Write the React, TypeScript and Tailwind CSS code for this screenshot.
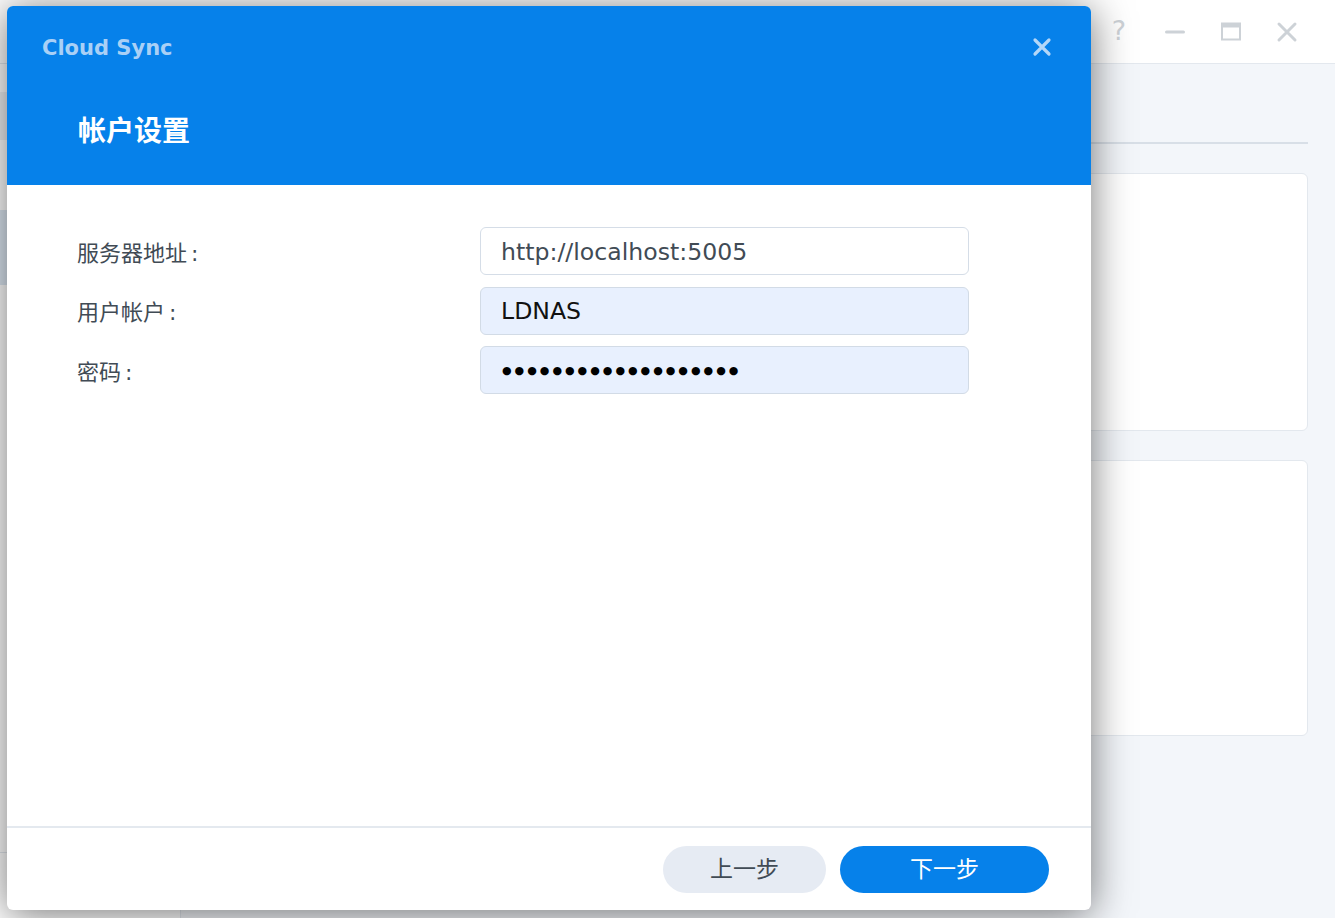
import React from "react";

const CJK = "font-['DejaVu_Sans','Noto_Sans_CJK_SC',sans-serif]";

export default function App() {
  return (
    <div className="relative w-[1335px] h-[918px] overflow-hidden bg-[#f3f6fa] font-['DejaVu_Sans','Noto_Sans_CJK_SC',sans-serif]">
      {/* Background application window */}
      <div className="flex flex-col w-full h-full">
        <div className="h-[64px] bg-white border-b border-[#e3e8ee] flex items-center justify-end pr-[37px] gap-[34px] text-[#cdd2d7]">
          <span className="w-[22px] flex justify-center text-[27px] font-medium leading-none pb-[3px]">?</span>
          <svg width="22" height="22" viewBox="0 0 22 22"><rect x="1" y="9.5" width="20" height="3" rx="1.5" fill="#cdd2d7" /></svg>
          <svg width="22" height="22" viewBox="0 0 22 22"><rect x="2" y="2.5" width="18" height="16" fill="none" stroke="#cdd2d7" strokeWidth="2" /><rect x="2" y="2.5" width="18" height="4" fill="#cdd2d7" /></svg>
          <svg width="22" height="22" viewBox="0 0 22 22"><path d="M3 3 L19 19 M19 3 L3 19" stroke="#cdd2d7" strokeWidth="3" strokeLinecap="round" /></svg>
        </div>
        <div className="flex flex-1">
          <div className="w-[181px] bg-white border-r border-[#e3e8ee] flex flex-col">
            <div className="h-[28px]" />
            <div className="h-[48px] bg-[#eef1f4]" />
            <div className="h-[70px]" />
            <div className="h-[75px] bg-[#dde8f3]" />
            <div className="flex-1" />
            <div className="h-[66px] border-t border-[#e3e8ee]" />
          </div>
          <div className="flex-1 flex flex-col pl-[24px] pr-[27px]">
            <div className="h-[80px] border-b-2 border-[#d8dfe7]" />
            <div className="mt-[29px] h-[258px] bg-white border border-[#e3e8ee] rounded-[6px]" />
            <div className="mt-[29px] h-[276px] bg-white border border-[#e3e8ee] rounded-[6px]" />
          </div>
        </div>
      </div>

      {/* Modal dialog */}
      <div className="absolute left-[7px] top-[6px] w-[1084px] h-[904px] bg-white rounded-[6px] overflow-hidden shadow-[0_4px_40px_rgba(0,0,0,0.55)] flex flex-col">
        <div className="h-[179px] bg-[#0681ea] flex flex-col">
          <div className="h-[82px] flex items-center justify-between pl-[35px] pr-[39px]">
            <span className="text-[21px] font-bold text-[#a9d0f6] font-['DejaVu_Sans',sans-serif] pt-[4px]">Cloud Sync</span>
            <svg width="20" height="20" viewBox="0 0 20 20"><path d="M3 3 L17 17 M17 3 L3 17" stroke="#b4d7f8" strokeWidth="3.2" strokeLinecap="round" /></svg>
          </div>
          <div className="h-[84px] flex items-center pl-[71px] pt-[4px]">
            <span className={`text-[28px] font-bold text-white ${CJK}`}>帐户设置</span>
          </div>
        </div>

        <div className="flex-1 pt-[42px] pl-[70px] flex flex-col gap-[11.5px]">
          <Row label="服务器地址">
            <div className="w-[489px] h-[48px] rounded-[6px] border border-[#d5dde7] bg-white flex items-center pl-[20px] pt-[3px] text-[23.6px] text-[#414b55]">http://localhost:5005</div>
          </Row>
          <Row label="用户帐户">
            <div className="w-[489px] h-[48px] rounded-[6px] border border-[#d2dbe6] bg-[#e8f0fe] flex items-center pl-[20px] pt-[3px] text-[23.6px] text-[#111]">LDNAS</div>
          </Row>
          <Row label="密码">
            <div className="w-[489px] h-[48px] rounded-[6px] border border-[#d2dbe6] bg-[#e8f0fe] flex items-center pl-[21px] pt-[2px] text-[11px] text-black tracking-[3px]">●●●●●●●●●●●●●●●●●●●</div>
          </Row>
        </div>

        <div className="h-[84px] border-t-2 border-[#e4e9ef] flex items-center justify-end pr-[42px] gap-[14px]">
          <button className={`w-[163px] h-[47px] rounded-full bg-[#e6ebf3] text-[23px] text-[#414b55] ${CJK}`}>上一步</button>
          <button className={`w-[209px] h-[47px] rounded-full bg-[#0681ea] text-[23px] text-white ${CJK}`}>下一步</button>
        </div>
      </div>
    </div>
  );
}

function Row({ label, children }: { label: string; children: React.ReactNode }) {
  return (
    <div className="flex items-center">
      <div className={`w-[403px] text-[22px] text-[#414b55] pt-[4px] ${CJK}`}>
        {label}
        <span className="ml-[4px]">:</span>
      </div>
      {children}
    </div>
  );
}
